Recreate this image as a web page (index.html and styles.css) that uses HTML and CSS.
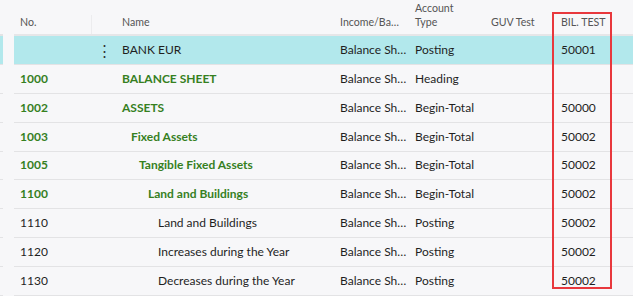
FILE: index.html
```html
<!DOCTYPE html>
<html>
<head>
<meta charset="utf-8">
<link rel="stylesheet" href="styles.css">
</head>
<body>
<div class="page">
  <div class="strip">
    <div class="strip-head"></div>
    <div class="strip-row sel"></div>
    <div class="strip-row"></div>
    <div class="strip-row"></div>
    <div class="strip-row"></div>
    <div class="strip-row"></div>
    <div class="strip-row"></div>
    <div class="strip-row"></div>
    <div class="strip-row"></div>
    <div class="strip-row"></div>
  </div>
  <div class="table">
    <div class="row head">
      <div class="c no">No.</div>
      <div class="c dots"></div>
      <div class="c name">Name</div>
      <div class="c inc hinc">Income/Balance</div>
      <div class="c acc">Account<br>Type</div>
      <div class="c guv">GUV Test</div>
      <div class="c bil">BIL. TEST</div>
      <div class="c rest"></div>
    </div>
    <div class="row sel">
      <div class="c no"></div>
      <div class="c dots">&#8942;</div>
      <div class="c name">BANK EUR</div>
      <div class="c inc">Balance Sheet</div>
      <div class="c acc">Posting</div>
      <div class="c guv"></div>
      <div class="c bil">50001</div>
      <div class="c rest"></div>
    </div>
    <div class="row bold">
      <div class="c no">1000</div>
      <div class="c dots"></div>
      <div class="c name">BALANCE SHEET</div>
      <div class="c inc">Balance Sheet</div>
      <div class="c acc">Heading</div>
      <div class="c guv"></div>
      <div class="c bil"></div>
      <div class="c rest"></div>
    </div>
    <div class="row bold">
      <div class="c no">1002</div>
      <div class="c dots"></div>
      <div class="c name">ASSETS</div>
      <div class="c inc">Balance Sheet</div>
      <div class="c acc">Begin-Total</div>
      <div class="c guv"></div>
      <div class="c bil">50000</div>
      <div class="c rest"></div>
    </div>
    <div class="row bold">
      <div class="c no">1003</div>
      <div class="c dots"></div>
      <div class="c name i1">Fixed Assets</div>
      <div class="c inc">Balance Sheet</div>
      <div class="c acc">Begin-Total</div>
      <div class="c guv"></div>
      <div class="c bil">50002</div>
      <div class="c rest"></div>
    </div>
    <div class="row bold">
      <div class="c no">1005</div>
      <div class="c dots"></div>
      <div class="c name i2">Tangible Fixed Assets</div>
      <div class="c inc">Balance Sheet</div>
      <div class="c acc">Begin-Total</div>
      <div class="c guv"></div>
      <div class="c bil">50002</div>
      <div class="c rest"></div>
    </div>
    <div class="row bold">
      <div class="c no">1100</div>
      <div class="c dots"></div>
      <div class="c name i3">Land and Buildings</div>
      <div class="c inc">Balance Sheet</div>
      <div class="c acc">Begin-Total</div>
      <div class="c guv"></div>
      <div class="c bil">50002</div>
      <div class="c rest"></div>
    </div>
    <div class="row">
      <div class="c no">1110</div>
      <div class="c dots"></div>
      <div class="c name i4">Land and Buildings</div>
      <div class="c inc">Balance Sheet</div>
      <div class="c acc">Posting</div>
      <div class="c guv"></div>
      <div class="c bil">50002</div>
      <div class="c rest"></div>
    </div>
    <div class="row">
      <div class="c no">1120</div>
      <div class="c dots"></div>
      <div class="c name i4">Increases during the Year</div>
      <div class="c inc">Balance Sheet</div>
      <div class="c acc">Posting</div>
      <div class="c guv"></div>
      <div class="c bil">50002</div>
      <div class="c rest"></div>
    </div>
    <div class="row">
      <div class="c no">1130</div>
      <div class="c dots"></div>
      <div class="c name i4">Decreases during the Year</div>
      <div class="c inc">Balance Sheet</div>
      <div class="c acc">Posting</div>
      <div class="c guv"></div>
      <div class="c bil">50002</div>
      <div class="c rest"></div>
    </div>
  </div>
  <div class="highlight"></div>
</div>
</body>
</html>
```
FILE: styles.css
```css
html, body {
  margin: 0;
  padding: 0;
  background: #f7f7f9;
}
body {
  font-family: Lato, "Noto Sans", sans-serif;
  font-size: 12px;
  color: #1f1f1f;
  width: 633px;
  height: 296px;
  overflow: hidden;
}
.page {
  position: relative;
  display: flex;
  gap: 11px;
  width: 633px;
  height: 296px;
}
.strip {
  width: 3px;
  display: flex;
  flex-direction: column;
}
.strip-head {
  height: 34px;
  border-bottom: 2px solid #e3e3e5;
}
.strip-row {
  height: 28px;
  border-bottom: 1px solid #e3e3e5;
}
.strip-row.sel {
  background: #b2e8ec;
}
.table {
  flex: 1;
  display: flex;
  flex-direction: column;
}
.row {
  display: grid;
  grid-template-columns: 78px 24px 218px 75px 76px 70px 64px 1fr;
  height: 28px;
  border-bottom: 1px solid #e3e3e5;
  align-items: center;
}
.row.head {
  align-items: end;
  color: #555;
  font-size: 10.6px;
  border-bottom: 2px solid #e6e6e8;
  height: 34px;
}
.row.head .c {
  padding-bottom: 5px;
}
.row.sel {
  background: #b2e8ec;
}
.c {
  padding-left: 6px;
  white-space: nowrap;
  overflow: hidden;
  line-height: 18px;
}
.head .c {
  line-height: 14px;
}
.c.inc {
  text-overflow: ellipsis;
  padding-right: 0;
}
.c.hinc {
  padding-right: 8px;
}
.c.dots {
  padding-left: 0;
  text-align: center;
  font-size: 15px;
  color: #333;
}
.bold {
  font-weight: 700;
  color: #36801f;
}
.bold .inc, .bold .acc, .bold .bil {
  font-weight: 400;
  color: #1f1f1f;
}
.head .no { border-right: 1px solid #ececee; }
.i1 { padding-left: 15px; }
.i2 { padding-left: 23px; }
.i3 { padding-left: 32px; }
.i4 { padding-left: 42px; }
.highlight {
  position: absolute;
  left: 552px;
  top: 12px;
  width: 56px;
  height: 273px;
  border: 2px solid #e8383d;
}
```
